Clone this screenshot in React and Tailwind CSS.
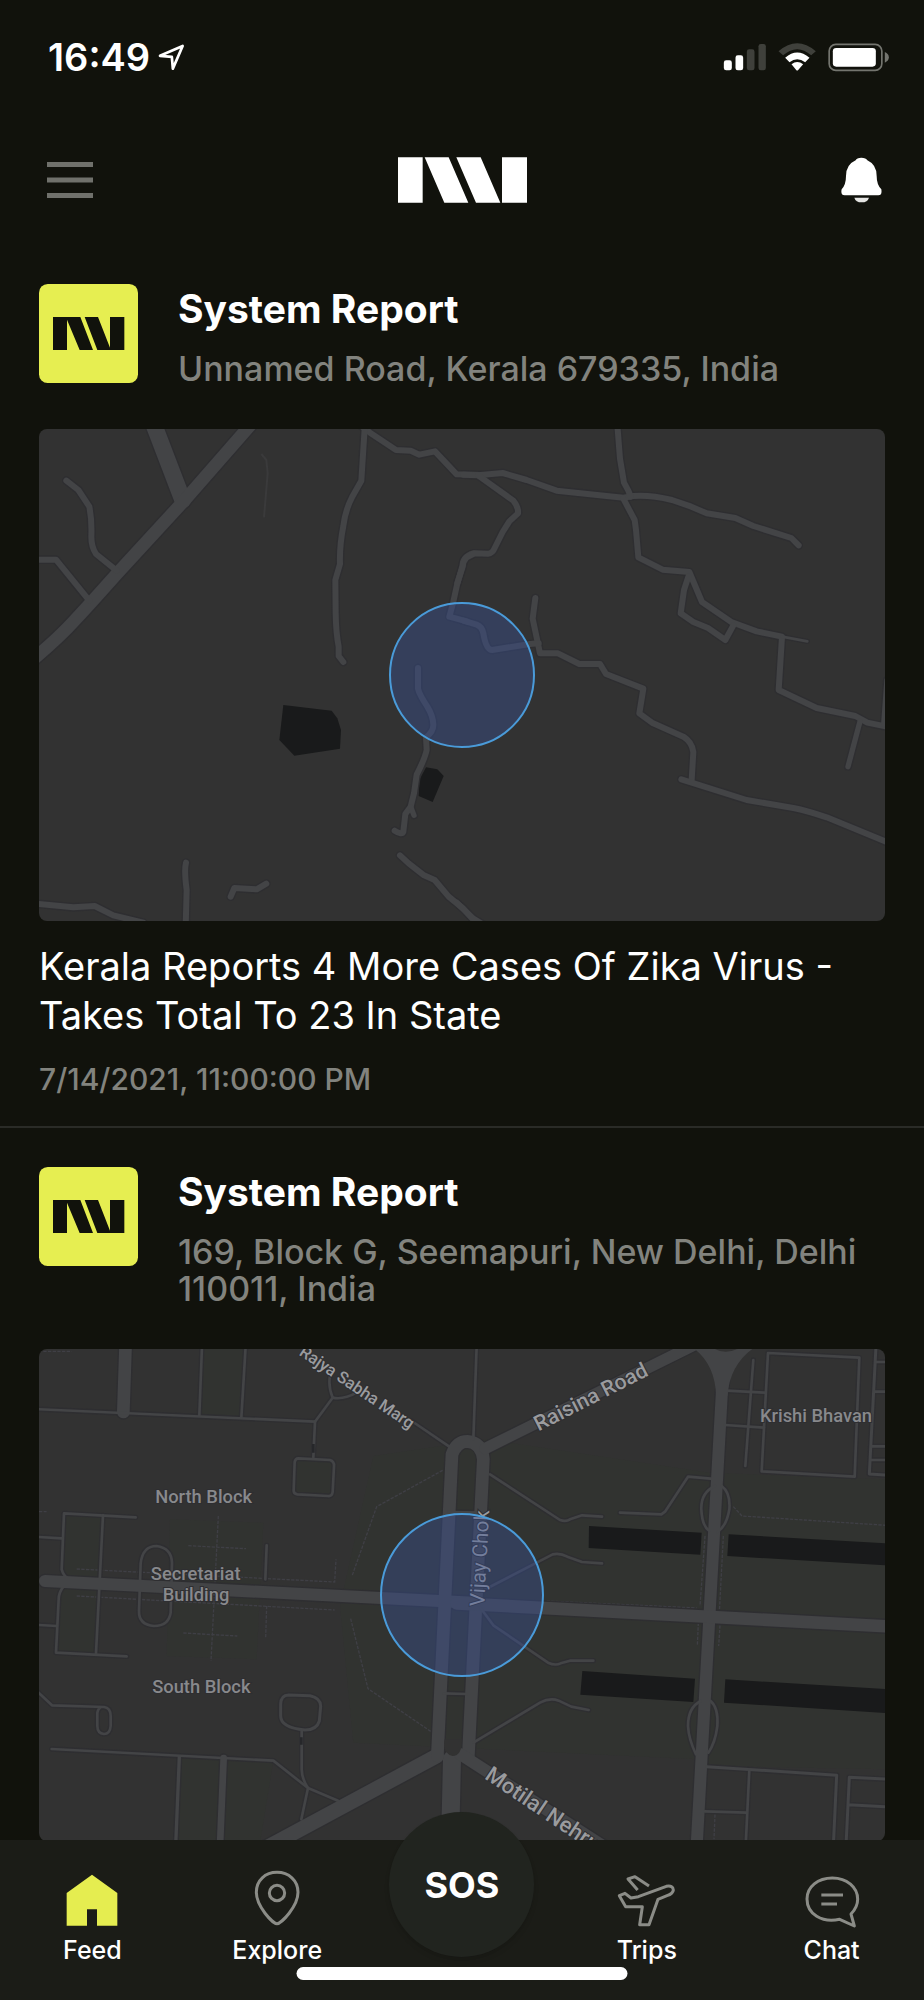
import { useState } from "react";

const ROAD = "#434446";
const CASING = "#2e2e31";

// roads are [path, width]; the east half of each map has its own origin
const EAST = "translate(1380 0)";

const keralaWest = [
    ["M460 10 L548 240", 50],
    ["M760 5 L556 238 L350 462 Q270 552 225 600 Q180 650 100 718", 38],
    ["M199 182 L235 210 L268 260 Q276 300 274 350 Q274 380 288 402 L350 452", 18],
    ["M100 419 H168 L268 542", 18],
    ["M1080 15 L1110 38 L1188 90 L1232 92 L1258 104 L1305 94 L1370 163 L1440 165", 18],
    ["M1094 25 L1084 182 L1056 232 Q1036 270 1030 318 Q1018 380 1020 432 L1006 480 L1007 580 Q1008 640 1016 680 V708 L1030 726", 18],
    ["M1420 400 Q1388 410 1388 436 L1372 490 L1360 545 L1348 590 L1400 604", 18],
    ["M1254 744 V806 Q1258 824 1282 860 Q1300 890 1300 915 Q1300 935 1278 952 L1280 990 Q1275 1015 1250 1064 L1242 1120 L1232 1160 L1216 1182 L1210 1235 Q1206 1246 1184 1232", 18],
    ["M1232 1160 L1242 1186", 16],
    ["M1200 1306 L1226 1330 L1272 1366 L1304 1380 L1346 1430 L1390 1466 L1430 1510", 18],
    ["M558 1328 Q552 1350 560 1410 L557 1520", 18],
    ["M692 1430 L703 1404 L770 1408 L799 1391", 18],
    ["M100 1450 L220 1462 L284 1458 L340 1486 L430 1508", 18],
];

const keralaEast = [
    ["M10 164 L54 166 L128 159 L200 180 L290 212 L490 233 L520 228 Q570 224 636 240 L694 260 L740 280 L826 294 L880 318 L994 354 L1016 376", 18],
    ["M54 166 L160 242 Q176 262 174 280 L148 304 L128 336 L104 384 Q98 400 84 401 L44 400 L20 412 Q8 424 8 440 L-8 490", 18],
    ["M472 15 L480 116 L492 188 L505 212 L512 230", 18],
    ["M490 236 L524 300 L528 330 L535 412 L608 449 L688 456 L726 546 L814 606 L890 634 L966 650 L956 810 L1070 864 L1186 888 L1222 908 L1290 922", 18],
    ["M685 470 L672 510 L662 580 L700 606 L744 624 L796 660 L820 616", 18],
    ["M966 650 L1042 664", 8],
    ["M226 534 L218 596 L240 700 H294 L358 732 H420 L438 762 L550 806 L538 880 L576 908 L670 950 Q696 966 700 996 L695 1080", 18],
    ["M664 1078 L860 1140 L1000 1164 Q1040 1172 1100 1192 L1290 1270", 18],
    ["M1200 904 L1164 1040", 16],
    ["M1280 780 L1270 915", 14],
    ["M10 602 L50 614 Q66 620 70 640 Q78 690 96 690 L210 672 L236 670", 18],
    ["M-10 1448 L40 1496 L80 1520", 18],
];

const delhiWest = [
    ["M377 10 L370 218", 38],
    ["M100 209 L945 247 L998 175 Q984 140 990 110", 8],
    ["M998 175 Q1030 182 1070 160", 8],
    ["M945 247 L940 355", 8],
    ["M606 20 L598 228", 8],
    ["M737 20 L724 235", 8],
    ["M895 357 L990 362 Q1003 366 1002 380 L998 458 Q996 472 984 470 L892 465 Q880 463 881 452 L884 368 Q886 357 895 357 Z", 8],
    ["M1235 245 L1348 322", 8],
    ["M407 534 L192 522 L185 690 Q190 708 202 716", 8],
    ["M309 528 L288 942", 8],
    ["M100 592 L185 597", 8],
    ["M190 742 Q176 760 176 780 L168 940 L380 951", 8],
    ["M100 856 L170 860", 8],
    ["M422 672 Q428 620 470 620 Q514 626 516 670 L512 820 Q506 860 462 860 Q416 856 417 815 Z", 8],
    ["M800 618 L796 720", 8],
    ["M135 725 L1420 790", 36],
    ["M110 1055 L156 1098 L312 1103 Q332 1106 332 1130 V1160 Q330 1184 312 1184 Q292 1182 292 1160 V1120 Q294 1108 302 1104", 8],
    ["M155 1229 L820 1264 L924 1346 L1014 1384", 8],
    ["M538 1252 L527 1520", 10],
    ["M671 1256 L660 1520", 20],
    ["M866 1067 L930 1069 Q962 1076 962 1100 L958 1145 Q950 1172 915 1172 Q842 1165 842 1130 V1095 Q842 1068 866 1067 Z", 9],
    ["M905 1172 V1290 Q906 1320 924 1346 L904 1440", 8],
    ["M790 1530 L1310 1250", 44],
    ["M1356 1260 L1350 1520", 54],
    ["M1312 1250 L1356 345 Q1370 306 1402 306 Q1446 310 1450 360 L1405 1250", 38],
    ["M1330 1062 L1400 1064", 8],
    ["M1345 518 L1450 520", 8],
];

const delhiEast = [
    ["M50 20 L40 300", 8],
    ["M75 328 L700 18", 34],
    ["M798 20 L785 170 L710 1520", 36],
    ["M-10 792 L1300 862", 38],
    ["M90 405 L300 542 Q318 548 330 540 L366 528 L426 532", 8],
    ["M480 520 L604 525 L616 516 L684 412 L752 418", 8],
    ["M765 440 Q722 460 724 510 Q726 560 748 575 M785 440 Q812 460 808 510 Q800 560 772 578", 8],
    ["M60 758 L278 645 Q300 640 322 652 L366 668 L426 672", 8],
    ["M50 790 L100 858 L264 970 Q286 980 302 972 L330 964 H400", 8],
    ["M40 1210 L240 1090 Q270 1074 296 1084 L334 1102 L386 1112", 8],
    ["M722 1085 Q684 1104 684 1160 Q686 1200 708 1245 M752 1085 Q776 1106 772 1160 Q766 1210 745 1240", 8],
    ["M880 62 L856 380", 8],
    ["M800 154 L914 160 M795 257 L912 265", 8],
    ["M924 41 L1198 55 L1184 412 L905 396 Z", 8],
    ["M1248 20 L1228 404 L1290 408", 9],
    ["M1246 68 H1290 M1243 157 H1290 M1234 321 H1290 M1232 362 H1290", 8],
    ["M740 1282 L1130 1308 L1120 1520", 9],
    ["M868 1292 L857 1520", 8],
    ["M734 1416 L860 1420", 8],
    ["M1290 1320 L1168 1314 L1158 1520 M1165 1396 L1290 1403", 9],
    ["M0 1244 L460 1540", 36],
];

const reports = [
    {
        id: 1,
        address: "Unnamed Road, Kerala 679335, India",
        map: KeralaMap,
        headline: "Kerala Reports 4 More Cases Of Zika Virus - Takes Total To 23 In State",
        time: "7/14/2021, 11:00:00 PM",
    },
    {
        id: 2,
        address: "169, Block G, Seemapuri, New Delhi, Delhi 110011, India",
        map: DelhiMap,
    },
];

function Lines({ roads, color, extra = 0 }) {
    return roads.map(([d, width]) => (
        <path
            key={d}
            d={d}
            stroke={color}
            strokeWidth={width + extra}
        />
    ));
}

function Roads({ west, east }) {
    return (
        <g
            fill="none"
            strokeLinecap="round"
            strokeLinejoin="round"
        >
            <Lines roads={west} color={CASING} extra={8} />
            <g transform={EAST}>
                <Lines roads={east} color={CASING} extra={8} />
            </g>
            <Lines roads={west} color={ROAD} />
            <g transform={EAST}>
                <Lines roads={east} color={ROAD} />
            </g>
        </g>
    );
}

function Area({ cy, r }) {
    return (
        <circle
            cx="1386"
            cy={cy}
            r={r}
            fill="#395298"
            fillOpacity="0.4"
            stroke="#4a9bd9"
            strokeWidth="6"
        />
    );
}

function KeralaMap() {
    return (
        <svg
            viewBox="117 27 2538 1476"
            role="img"
            aria-label="Map of Kerala"
            className="block w-full rounded-lg bg-[#323232]"
        >
            <path d="M850 855 L995 872 L1012 895 L1023 930 L1020 986 L883 1007 L838 960 Z" fill="#191a1b" />
            <path d="M1278 1042 L1312 1048 L1331 1068 L1298 1146 L1256 1128 L1258 1080 Z" fill="#191a1b" />
            <path d="M784 102 L799 120 L803 160 L792 292" fill="none" stroke="#3a3a3b" strokeWidth="6" />
            <Roads west={keralaWest} east={keralaEast} />
            <Area cy="765" r="216" />
        </svg>
    );
}

function DelhiMap() {
    return (
        <svg
            viewBox="117 29 2538 1476"
            role="img"
            aria-label="Map of New Delhi"
            className="block w-full rounded-lg bg-[#323232]"
        >
            <g fill="#313330">
                <path d="M606 29 H737 L724 235 L598 228 Z" />
                <path d="M1120 350 L1460 300 L2130 400 L2660 420 V1290 L2110 1280 L2090 1260 L1060 1210 L1020 800 Z" />
                <path d="M190 525 L309 530 L290 942 L168 940 Z" />
                <path d="M510 540 L790 550 L770 960 L500 950 Z" />
                <path d="M887 362 L1000 366 L996 470 L884 465 Z" />
                <path d="M538 1252 L820 1264 L780 1510 H527 Z" />
            </g>
            <g fill="none" stroke="#3f3f45" strokeWidth="4" strokeDasharray="10 4">
                <path d="M655 530 L633 965 M565 619 L738 628 M550 881 L712 890" />
                <path d="M230 689 L1004 728 L1008 660 M230 770 L1004 812 M800 800 L797 896" />
                <path d="M1328 393 L1130 502 L1056 710 M1052 838 L1104 1048 L1292 1176" />
                <path d="M2200 502 L2226 530 L2660 558 M2115 590 L2100 800 M2170 590 L2158 820 M1640 785 L2090 806" />
                <path d="M2095 850 L2092 920 M2160 858 L2156 920 M2145 1425 L2142 1500" />
                <path d="M130 36 H215 M117 517 H140" />
            </g>
            <Roads west={delhiWest} east={delhiEast} />
            <path d="M2072 20 H2270 Q2190 70 2182 170 L2148 170 Q2146 70 2072 20 Z" fill={ROAD} />
            <path d="M2145 29 Q2175 46 2212 29 Z" fill="#323232" />
            <path d="M1334 1200 L1386 1200 Q1386 1250 1358 1250 Q1334 1246 1332 1215 Z" fill="#323232" />
            <path d="M936 314 H944 V340 H936 Z M900 1194 H908 V1216 H900 Z" fill="#26272a" />
            <g fill="#191a1b">
                <path d="M1767 560 L2105 580 L2101 646 L1766 626 Z" />
                <path d="M2186 585 L2660 612 V678 L2182 650 Z" />
                <path d="M1747 995 L2085 1018 L2080 1088 L1741 1066 Z" />
                <path d="M2176 1020 L2660 1049 V1121 L2172 1090 Z" />
            </g>
            <g
                fill="#88898c"
                stroke="#2e2e31"
                strokeWidth="6"
                paintOrder="stroke"
                textAnchor="middle"
                fontSize="55"
                fontWeight="500"
                fontFamily="Roboto, 'Liberation Sans', sans-serif"
            >
                <text x="611" y="491">North Block</text>
                <text x="587" y="721">Secretariat</text>
                <text x="588" y="785">Building</text>
                <text x="604" y="1061">South Block</text>
                <text x="2448" y="248">Krishi Bhavan</text>
                <g fill="#9a9b9e">
                    <text transform="translate(1062 158) rotate(34)" fontSize="50">Rajya Sabha Marg</text>
                    <text transform="translate(1782 192) rotate(-27)" fontSize="64">Raisina Road</text>
                    <text transform="translate(1460 658) rotate(-87)" fontSize="62" fontWeight="400">Vijay Chok</text>
                    <text transform="translate(1451 1316) rotate(34)" fontSize="66" textAnchor="start">Motilal Nehru</text>
                </g>
            </g>
            <Area cy="767" r="243" />
        </svg>
    );
}

function StatusBar() {
    return (
        <div className="flex h-[114px] shrink-0 items-center justify-between pr-[34px] pl-12">
            <div className="flex items-center gap-2">
                <span className="text-[38px] leading-[44px] font-semibold">16:49</span>
                <svg viewBox="380 40 80 80" className="size-[27px]" aria-hidden="true">
                    <path
                        d="M386 75 L453 46 L424 113 L421 78 Z"
                        fill="none"
                        stroke="white"
                        strokeWidth="8"
                        strokeLinejoin="round"
                    />
                </svg>
            </div>
            <svg viewBox="40 20 500 90" className="h-[30px] w-[167px]" aria-hidden="true">
                <rect x="42" y="75" width="24" height="30" rx="7" fill="white" />
                <rect x="77" y="60" width="23" height="45" rx="7" fill="white" />
                <rect x="111" y="42" width="23" height="63" rx="7" fill="#3f403b" />
                <rect x="146" y="26" width="22" height="79" rx="7" fill="#3f403b" />
                <path d="M206 48 Q262 0 318 48 L304 60 Q262 24 220 60 Z" fill="#3f403b" />
                <path d="M226 67 Q262 36 299 67 L286 81 Q262 62 239 81 Z" fill="white" />
                <path d="M245 87 Q262 73 280 87 L265 104 Q262 107 259 104 Z" fill="white" />
                <rect x="358" y="27" width="158" height="78" rx="20" fill="none" stroke="#74756f" strokeWidth="5" />
                <rect x="369" y="38" width="129" height="56" rx="10" fill="white" />
                <path d="M525 50 Q537 55 537 66 Q537 77 525 82 Z" fill="#74756f" />
            </svg>
        </div>
    );
}

function Header() {
    return (
        <header className="grid h-[131px] shrink-0 grid-cols-3 items-center px-[42px]">
            <button type="button" aria-label="Menu" className="justify-self-start p-[5px]">
                <svg viewBox="0 0 46 36" className="h-9 w-[46px]">
                    <path d="M0 2.5 H46 M0 18 H46 M0 33.5 H46" stroke="#70716c" strokeWidth="5" />
                </svg>
            </button>
            <svg viewBox="1104 379 387 136" role="img" aria-label="Logo" className="h-[46px] w-[129px] justify-self-center">
                <path
                    d="M1104 379 H1178 V515 H1104 Z M1184 379 H1256 L1315 515 H1243 Z M1279 379 H1352 L1411 515 H1338 Z M1416 379 H1491 V515 H1416 Z"
                    fill="white"
                />
            </svg>
            <button type="button" aria-label="Notifications" className="justify-self-end">
                <svg viewBox="396 364 123 136" className="h-[46px] w-[41px]">
                    <path
                        d="M440 373 Q443 365 457 365 Q471 365 475 373 Q503 386 503 420 Q503 446 517 460 Q520 478 508 478 H407 Q394 478 398 460 Q411 446 411 420 Q411 386 440 373 Z"
                        fill="white"
                    />
                    <path d="M436 485 H480 Q476 499 458 499 Q440 499 436 485 Z" fill="#e4e4e2" />
                </svg>
            </button>
        </header>
    );
}

function Avatar() {
    return (
        <svg viewBox="28 39 297 297" className="size-[99px] shrink-0" aria-hidden="true">
            <rect x="28" y="39" width="297" height="297" rx="26" fill="#e6ee51" />
            <path
                d="M70 138 H152 L190 237 H150 L112 146 V237 H70 Z M165 138 H205 L241 230 V138 H284 V237 H203 Z"
                fill="#11120c"
            />
        </svg>
    );
}

function Report({ report }) {
    const Map = report.map;

    return (
        <article className="border-b-2 border-[#2a2b27] px-[39px] pt-[39px] pb-[29px]">
            <div className="mb-[42px] flex gap-10">
                <Avatar />
                <div>
                    <h2 className="text-[39px] leading-[50px] font-bold">System Report</h2>
                    <p className="mt-4 text-[34px] leading-[37px] font-medium text-[#82837e]">{report.address}</p>
                </div>
            </div>
            <Map />
            {report.headline && <p className="mt-[21px] text-[38px] leading-[49px]">{report.headline}</p>}
            {report.time && <p className="mt-[21px] text-[30px] leading-9 font-medium text-[#82837e]">{report.time}</p>}
        </article>
    );
}

const stroke = { fill: "none", stroke: "#8b8c87", strokeWidth: 9, strokeLinejoin: "round" };

function FeedIcon() {
    return (
        <svg viewBox="189 200 180 180" className="size-[60px]" aria-hidden="true">
            <path d="M279 220 L355 275 V373 H294 V324 H264 V373 H203 V275 Z" fill="#e5ed50" />
        </svg>
    );
}

function ExploreIcon() {
    return (
        <svg viewBox="743 200 180 180" className="size-[60px]" aria-hidden="true" {...stroke}>
            <path d="M833 367 C820 367 771 315 771 273 C771 237 798 213 833 213 C868 213 896 237 896 273 C896 315 846 367 833 367 Z" />
            <circle cx="833" cy="275" r="23" />
        </svg>
    );
}

function TripsIcon() {
    return (
        <svg viewBox="470 200 180 180" className="size-[60px]" aria-hidden="true" {...stroke}>
            <path d="M477 283 L494 276 L512 290 L534 286 L618 255 Q638 251 639 266 Q638 277 620 283 L593 294 L566 370 H538 L546 316 H496 Z" />
            <path d="M532 266 L503 233 L524 226 L566 254" />
        </svg>
    );
}

function ChatIcon() {
    return (
        <svg viewBox="1025 200 180 180" className="size-[60px]" aria-hidden="true" {...stroke}>
            <path d="M1138 354 C1085 366 1040 338 1040 293 C1040 256 1073 230 1116 230 C1160 230 1192 258 1192 294 C1192 312 1184 326 1172 338 L1182 374 Z" />
            <path d="M1083 281 H1148 M1083 308 H1130" />
        </svg>
    );
}

function Tab({ label, icon, active, onSelect }) {
    const Icon = icon;

    return (
        <a
            href={`#${label.toLowerCase()}`}
            aria-current={active ? "page" : undefined}
            onClick={onSelect}
            className="flex flex-col items-center gap-[6px]"
        >
            <Icon />
            <span className="text-[25px] leading-8 font-medium">{label}</span>
        </a>
    );
}

function TabBar() {
    const [tab, setTab] = useState("Feed");

    return (
        <nav className="relative grid h-40 shrink-0 grid-cols-5 bg-[#1b1c17] pt-7">
            <Tab label="Feed" icon={FeedIcon} active={tab === "Feed"} onSelect={() => setTab("Feed")} />
            <Tab label="Explore" icon={ExploreIcon} active={tab === "Explore"} onSelect={() => setTab("Explore")} />
            <button
                type="button"
                className="-mt-14 flex size-[145px] items-center justify-center justify-self-center rounded-full bg-[#21241f] text-[36px] font-bold shadow-md"
            >
                SOS
            </button>
            <Tab label="Trips" icon={TripsIcon} active={tab === "Trips"} onSelect={() => setTab("Trips")} />
            <Tab label="Chat" icon={ChatIcon} active={tab === "Chat"} onSelect={() => setTab("Chat")} />
            <div className="absolute bottom-5 left-1/2 h-[13px] w-[331px] -translate-x-1/2 rounded-full bg-white" />
        </nav>
    );
}

const App = () => {
    return (
        <div className="flex h-screen flex-col bg-[#11120c] font-[Inter,'Liberation_Sans',sans-serif] text-white">
            <StatusBar />
            <Header />
            <main className="min-h-0 flex-1 overflow-y-auto [scrollbar-width:none]">
                {reports.map((report) => (
                    <Report key={report.id} report={report} />
                ))}
            </main>
            <TabBar />
        </div>
    );
};

export default App;
